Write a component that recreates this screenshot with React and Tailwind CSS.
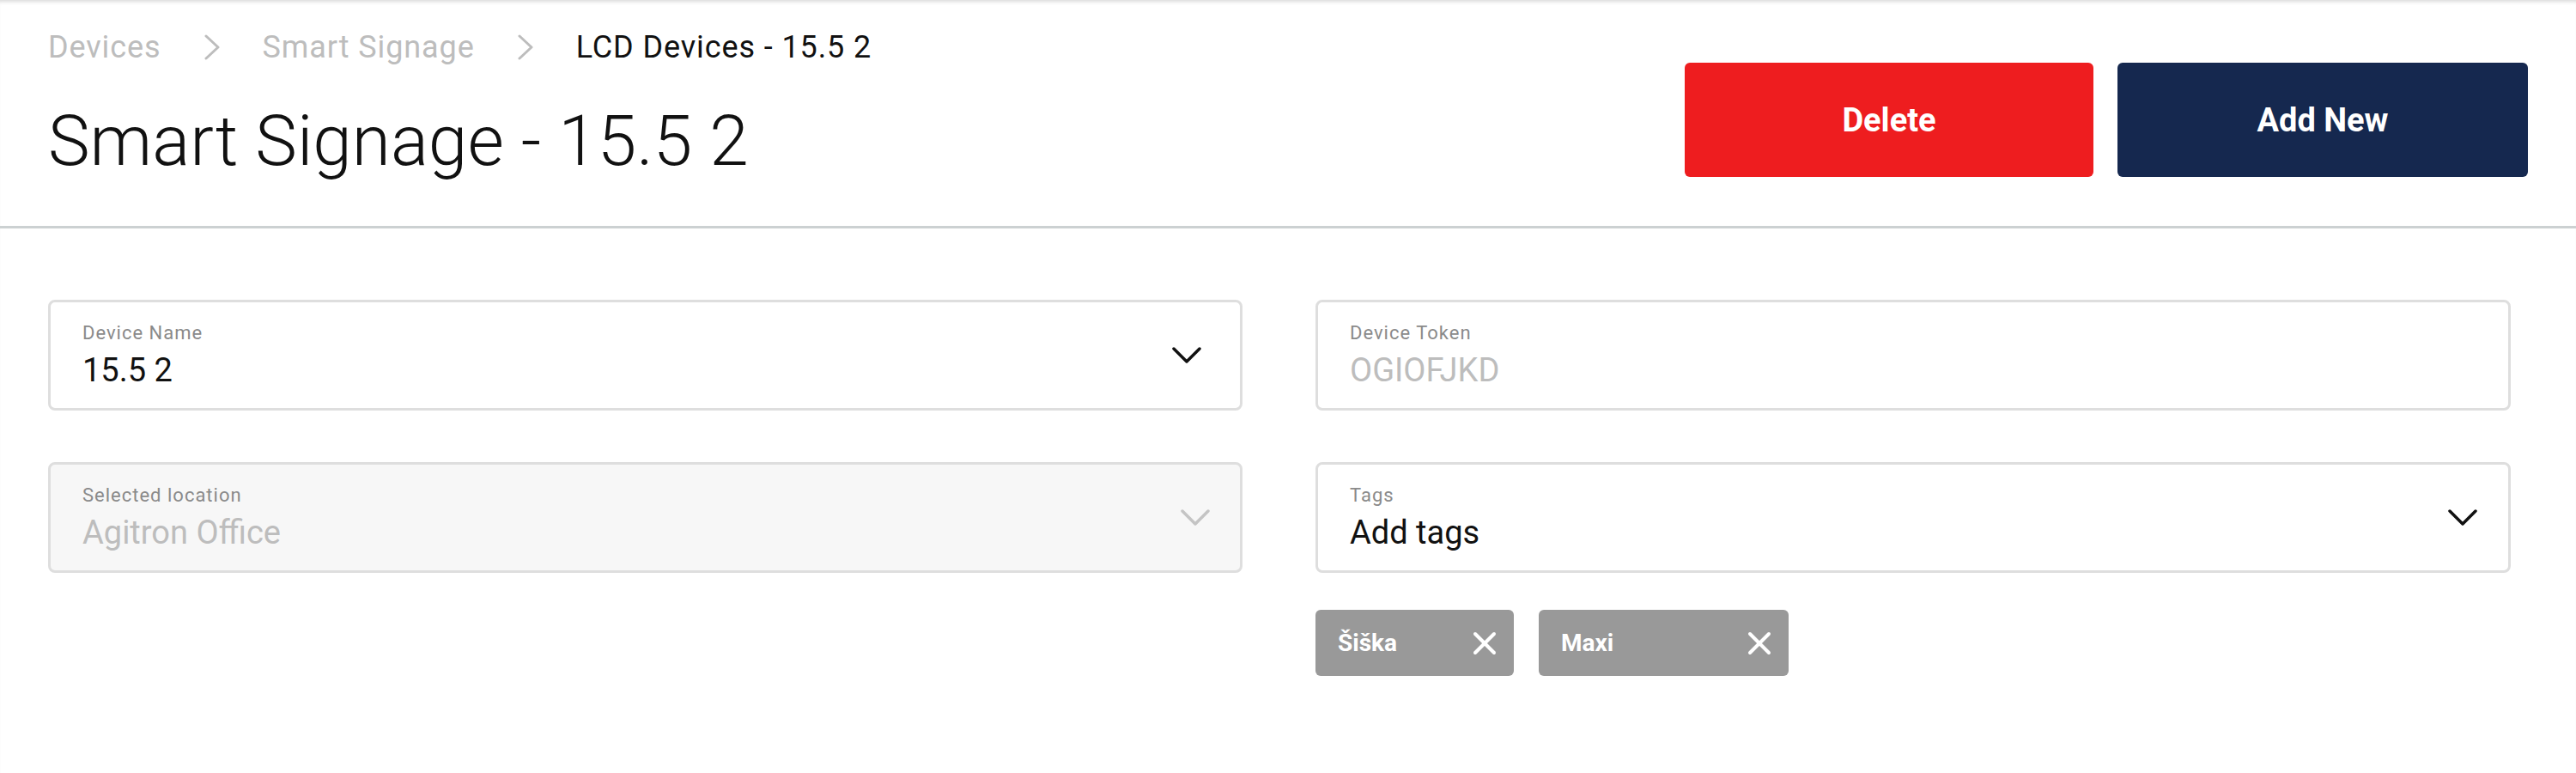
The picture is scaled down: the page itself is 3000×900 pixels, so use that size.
import React from "react";

function Crumb({ children, color }) {
  return <span className={color}>{children}</span>;
}

function CrumbChevron() {
  return (
    <svg width="18" height="30" viewBox="0 0 18 30" fill="none" className="shrink-0">
      <polyline points="2,2 16,15 2,28" stroke="#bdbdbd" strokeWidth="3" strokeLinecap="round" strokeLinejoin="round" />
    </svg>
  );
}

function Chevron({ color }) {
  return (
    <svg width="34" height="20" viewBox="0 0 34 20" fill="none" className="shrink-0">
      <polyline points="2,2 17,17 32,2" stroke={color} strokeWidth="3.5" strokeLinecap="round" strokeLinejoin="round" />
    </svg>
  );
}

function XIcon() {
  return (
    <svg width="28" height="28" viewBox="0 0 28 28" fill="none" className="shrink-0">
      <line x1="3" y1="3" x2="25" y2="25" stroke="white" strokeWidth="4" strokeLinecap="round" />
      <line x1="25" y1="3" x2="3" y2="25" stroke="white" strokeWidth="4" strokeLinecap="round" />
    </svg>
  );
}

function Field({ label, value, valueClass, bgClass, chevron, prClass }) {
  return (
    <div
      className={`h-[129px] border-[3px] border-[#dedede] rounded-[8px] flex items-center justify-between pl-[37px] ${prClass} ${bgClass}`}
    >
      <div className="flex flex-col">
        <span className="text-[22px] leading-none tracking-[1px] text-[#8a8a8a]">{label}</span>
        <span className={`mt-[13px] text-[38px] leading-none ${valueClass}`}>{value}</span>
      </div>
      {chevron ? <Chevron color={chevron} /> : null}
    </div>
  );
}

function Chip({ label, widthClass }) {
  return (
    <div
      className={`h-[77px] ${widthClass} rounded-[6px] bg-[#999999] flex items-center justify-between pl-[26px] pr-[20px] text-white text-[28px] font-bold leading-none`}
    >
      <span>{label}</span>
      <XIcon />
    </div>
  );
}

export default function App() {
  return (
    <div className="w-[3000px] h-[900px] bg-white font-['Roboto',_'Noto_Sans',_sans-serif] shadow-[inset_0_5px_4px_-3px_rgba(0,0,0,0.15)]">
      <div className="flex justify-between items-start px-[56px] pt-[37px] h-[266px] border-b-[3px] border-[#ccd1d2]">
        <div className="flex flex-col">
          <div className="h-[36px] flex items-center gap-[50px] text-[36px] leading-none tracking-[0.9px]">
            <Crumb color="text-[#bdbdbd]">Devices</Crumb>
            <CrumbChevron />
            <Crumb color="text-[#bdbdbd]">Smart Signage</Crumb>
            <CrumbChevron />
            <Crumb color="text-[#111111]">LCD Devices - 15.5 2</Crumb>
          </div>
          <h1 className="mt-[50px] text-[82px] font-light leading-none text-[#111111]">Smart Signage - 15.5 2</h1>
        </div>
        <div className="mt-[36px] flex gap-[28px]">
          <button className="w-[476px] h-[133px] rounded-[6px] bg-[#ee1d1f] text-white text-[38px] font-bold leading-none flex items-center justify-center pt-[1px]">
            Delete
          </button>
          <button className="w-[478px] h-[133px] rounded-[6px] bg-[#15284f] text-white text-[38px] font-bold leading-none flex items-center justify-center pt-[1px]">
            Add New
          </button>
        </div>
      </div>

      <div className="flex pl-[56px] pt-[83px] gap-[85px]">
        <div className="w-[1391px] flex flex-col gap-[60px]">
          <Field
            label="Device Name"
            value="15.5 2"
            valueClass="text-[#111111]"
            bgClass="bg-white"
            chevron="#111111"
            prClass="pr-[45px]"
          />
          <Field
            label="Selected location"
            value="Agitron Office"
            valueClass="text-[#bdbdbd]"
            bgClass="bg-[#f7f7f7]"
            chevron="#c4c4c4"
            prClass="pr-[35px]"
          />
        </div>
        <div className="w-[1392px] flex flex-col">
          <div className="flex flex-col gap-[60px]">
            <Field
              label="Device Token"
              value="OGIOFJKD"
              valueClass="text-[#bdbdbd]"
              bgClass="bg-white"
              chevron={null}
              prClass="pr-[36px]"
            />
            <Field
              label="Tags"
              value="Add tags"
              valueClass="text-[#111111]"
              bgClass="bg-white"
              chevron="#111111"
              prClass="pr-[36px]"
            />
          </div>
          <div className="mt-[43px] flex gap-[29px]">
            <Chip label="Šiška" widthClass="w-[231px]" />
            <Chip label="Maxi" widthClass="w-[291px]" />
          </div>
        </div>
      </div>
    </div>
  );
}
